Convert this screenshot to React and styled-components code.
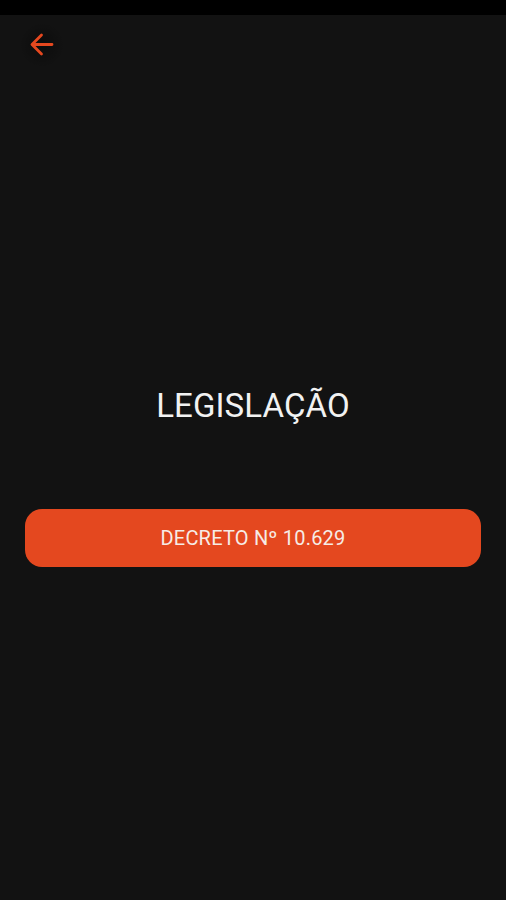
import React from 'react'
import styled, { createGlobalStyle } from 'styled-components'

const GlobalStyle = createGlobalStyle`
    html, body {
        margin: 0;
        padding: 0;
        background-color: #121212;
    }
    body {
        font-family: Roboto, "Liberation Sans", sans-serif;
    }
`
const Screen = styled.div`
    display: flex;
    flex-direction: column;
    width: 506px;
    height: 900px;
    background-color: #121212;
    overflow: hidden;
`
const StatusBar = styled.div`
    height: 15px;
    background-color: #000;
    flex-shrink: 0;
`
const Toolbar = styled.header`
    display: flex;
    align-items: center;
    height: 60px;
    padding-left: 19px;
`
const BackButton = styled.button`
    display: flex;
    align-items: center;
    justify-content: center;
    width: 46px;
    height: 46px;
    padding: 0;
    border: none;
    border-radius: 50%;
    background: radial-gradient(circle, rgba(0, 0, 0, 0.35) 0%, rgba(0, 0, 0, 0) 70%);
    cursor: pointer;
`
const Body = styled.main`
    display: flex;
    flex-direction: column;
    align-items: center;
    padding: 0 25px;
`
const Title = styled.h1`
    margin: 311px 0 0 0;
    color: #f2f2f2;
    font-family: Roboto, "Liberation Sans", sans-serif;
    font-size: 33px;
    font-weight: 400;
    line-height: 40px;
    letter-spacing: 0.1px;
`
const ActionButton = styled.button`
    display: flex;
    align-items: center;
    justify-content: center;
    width: 100%;
    height: 58px;
    margin-top: 83px;
    border: none;
    border-radius: 17px;
    background-color: #e4481f;
    color: #f6ece6;
    font-family: Roboto, "Liberation Sans", sans-serif;
    font-size: 20px;
    font-weight: 400;
    letter-spacing: 0.2px;
    text-transform: uppercase;
    cursor: pointer;
`

const ArrowBack = () => (
    <svg width="24" height="24" viewBox="0 0 24 24" fill="none">
        <path
            d="M22 11.5H2.5M11.5 2L2 11.5L11.5 21"
            stroke="#e5481f"
            strokeWidth="2.8"
            strokeLinecap="round"
            strokeLinejoin="round"
        />
    </svg>
)

const App = () => {
    return (
        <Screen>
            <GlobalStyle />
            <StatusBar />
            <Toolbar>
                <BackButton aria-label="Voltar">
                    <ArrowBack />
                </BackButton>
            </Toolbar>
            <Body>
                <Title>LEGISLAÇÃO</Title>
                <ActionButton>Decreto Nº 10.629</ActionButton>
            </Body>
        </Screen>
    )
}

export default App
